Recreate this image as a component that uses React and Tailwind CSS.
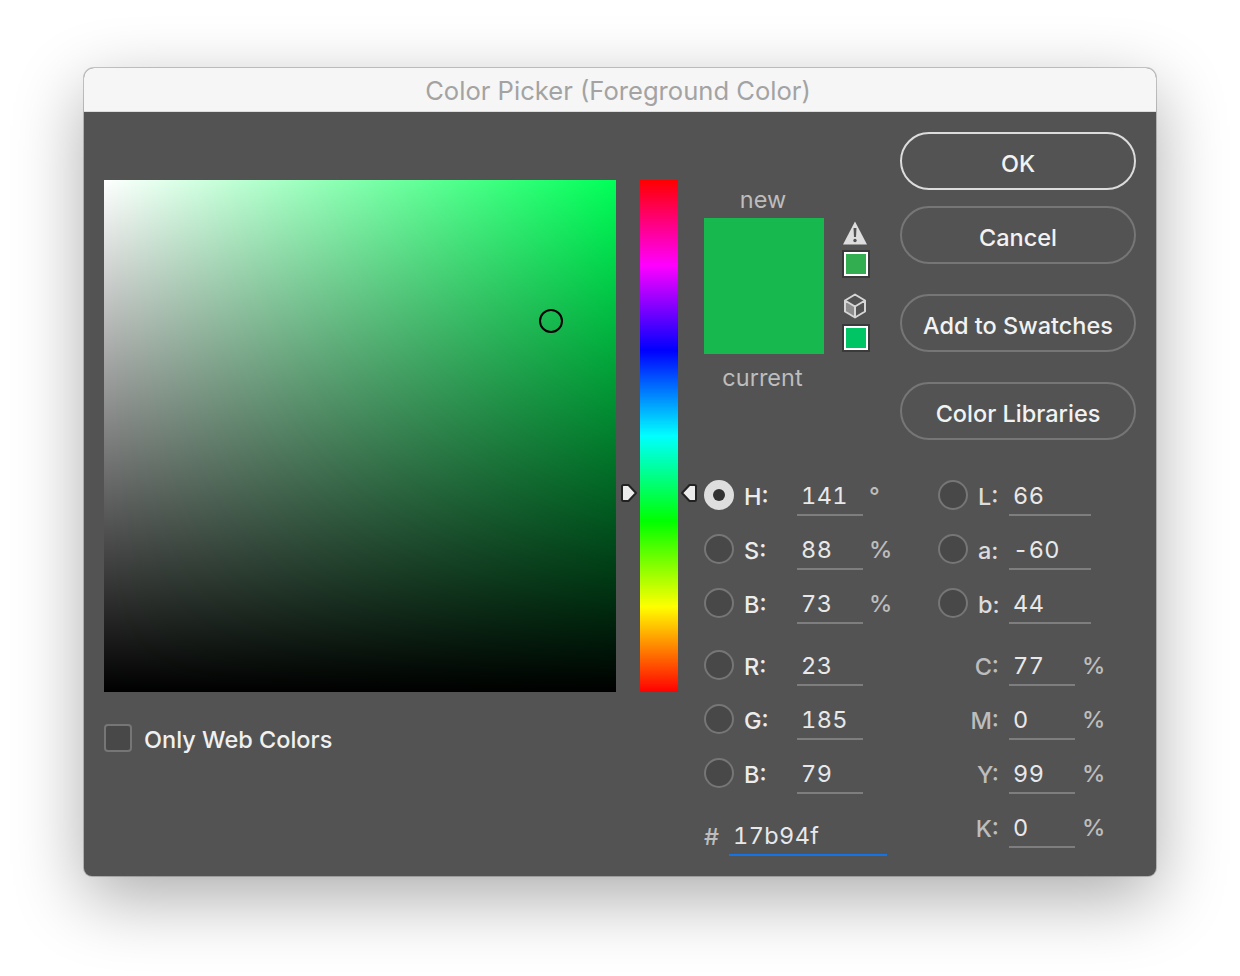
import React from 'react';

const font = { fontFamily: 'Inter, "Liberation Sans", sans-serif' };

const Radio = ({ on }) =>
  on ? (
    <div className="w-[30px] h-[30px] shrink-0 rounded-full bg-[#dedede] flex items-center justify-center">
      <div className="w-[12px] h-[12px] rounded-full bg-[#333333]"></div>
    </div>
  ) : (
    <div className="w-[30px] h-[30px] shrink-0 rounded-full bg-[#484848] border-2 border-[#767676]"></div>
  );

const Field = ({ value, width, active }) => (
  <div
    className={`${width} h-[38px] border-b-2 pl-[4px] flex items-center tracking-[0.4px] tabular-nums text-[#e8e8e8] ${
      active ? 'border-[#1473e6]' : 'border-[#7e7e7e]'
    }`}
  >
    {value}
  </div>
);

// left block rows: radio, label, field, unit
const HsbRow = ({ on, label, value, unit }) => (
  <div className="h-[54px] flex items-center">
    <Radio on={on} />
    <div className="w-[63px] pl-[10px] pt-[3px] font-medium text-[#ececec]">{label}</div>
    <div className="pt-[4px]">
      <Field value={value} width="w-[66px]" />
    </div>
    <div className="pl-[6px] pt-[2px] font-medium text-[#bdbdbd]">{unit}</div>
  </div>
);

const LabRow = ({ label, value }) => (
  <div className="h-[54px] flex items-center">
    <Radio />
    <div className="w-[41px] pl-[10px] pt-[3px] font-medium text-[#dcdcdc]">{label}</div>
    <div className="pt-[4px]">
      <Field value={value} width="w-[82px]" />
    </div>
  </div>
);

const CmykRow = ({ label, value }) => (
  <div className="h-[54px] flex items-center">
    <div className="w-[71px] pr-[10px] pt-[3px] text-right font-medium text-[#bdbdbd]">{label}</div>
    <div className="pt-[4px]">
      <Field value={value} width="w-[66px]" />
    </div>
    <div className="pl-[7px] pt-[2px] font-medium text-[#bdbdbd]">%</div>
  </div>
);

const Button = ({ children, primary, className = '' }) => (
  <div
    className={`w-[236px] h-[58px] rounded-full border-2 pt-[6px] flex items-center justify-center text-[#f2f2f2] font-medium ${
      primary ? 'border-[#dcdcdc]' : 'border-[#767676]'
    } ${className}`}
  >
    {children}
  </div>
);

const Swatch = ({ className }) => (
  <div className="w-[28px] h-[28px] border-2 border-[#3a3a3a] shrink-0">
    <div className={`w-full h-full border-2 border-white ${className}`}></div>
  </div>
);

const App = () => {
  return (
    <div className="w-[1240px] h-[976px] bg-white overflow-hidden flex justify-center pt-[68px]" style={font}>
      <div className="w-[1072px] h-[808px] rounded-t-[10px] rounded-b-[8px] overflow-hidden shadow-[0_0_0_1px_rgba(0,0,0,0.2),0_22px_70px_rgba(0,0,0,0.33)] text-[23.5px] leading-none bg-[#535353] flex flex-col">
        <div className="h-[44px] shrink-0 bg-[#f6f6f6] border-b border-[#dcdcdc] flex items-center justify-center pr-[4px] pt-[3px] text-[25.6px] text-[#a3a3a3]">
          Color Picker (Foreground Color)
        </div>

        <div className="flex-1 flex pl-[20px] pr-[20px]">
          {/* picker square */}
          <div className="w-[512px] pt-[68px]">
            <div className="relative w-[512px] h-[512px] bg-[linear-gradient(to_top,#000,transparent),linear-gradient(to_right,#fff,#00ff58)]">
              <div className="absolute left-[435px] top-[129px] w-[24px] h-[24px] rounded-full border-2 border-black"></div>
            </div>
            <div className="flex items-center mt-[32px]">
              <div className="w-[28px] h-[28px] rounded-[4px] border-2 border-[#767676] bg-[#484848]"></div>
              <div className="pl-[12px] pt-[4px] font-medium text-[#f0f0f0]">Only Web Colors</div>
            </div>
          </div>

          {/* hue strip */}
          <div className="ml-[24px] w-[38px] pt-[68px]">
            <div className="relative w-[38px] h-[512px] bg-[linear-gradient(to_bottom,#f00,#f0f,#00f,#0ff,#0f0,#ff0,#f00)]">
              <svg className="absolute left-[-20px] top-[303px]" width="18" height="20" viewBox="0 0 18 20">
                <path d="M3.500 2h5L16 10l-7.500 8h-5A1.500 1.500 0 0 1 2 16.500v-13A1.500 1.500 0 0 1 3.500 2z" fill="#ececec" stroke="#222" strokeWidth="2" strokeLinejoin="round" />
              </svg>
              <svg className="absolute left-[40px] top-[303px]" width="18" height="20" viewBox="0 0 18 20">
                <path d="M14.500 2h-5L2 10l7.500 8h5a1.500 1.500 0 0 0 1.500-1.500v-13A1.500 1.500 0 0 0 14.500 2z" fill="#ececec" stroke="#222" strokeWidth="2" strokeLinejoin="round" />
              </svg>
            </div>
          </div>

          {/* right side */}
          <div className="ml-[26px] w-[432px] pt-[20px]">
            <div className="flex h-[308px] justify-between">
              <div className="flex pt-[54px]">
                <div className="w-[120px] flex flex-col items-center">
                  <div className="h-[32px] pt-[2px] pr-[2px] text-[#bdbdbd]">new</div>
                  <div className="w-[120px] h-[136px] bg-[#17b94f]"></div>
                  <div className="pt-[12px] pr-[3px] text-[#bdbdbd]">current</div>
                </div>
                <div className="ml-[18px] pt-[33px] flex flex-col items-center">
                  <svg className="mr-[2px]" width="26" height="26" viewBox="0 0 26 26">
                    <path d="M13 2.500 25 25.500H1z" fill="#dedede" strokeLinejoin="round" />
                    <path d="M11.500 9h3l-.5 9h-2z" fill="#535353" />
                    <circle cx="13" cy="21.500" r="1.700" fill="#535353" />
                  </svg>
                  <div className="mt-[5px]">
                    <Swatch className="bg-[#32ad4f]" />
                  </div>
                  <svg className="mt-[15px] mr-[2px]" width="24" height="26" viewBox="0 0 24 26">
                    <path d="M2 7.500v11l10 6V13.500z" fill="#8e8e8e" />
                    <path d="M12 1.500 22 7.500v11l-10 6-10-6v-11zM2 7.500l10 6 10-6M12 13.500v11" fill="none" stroke="#d6d6d6" strokeWidth="2" strokeLinejoin="round" />
                  </svg>
                  <div className="mt-[5px]">
                    <Swatch className="bg-[#00c565]" />
                  </div>
                </div>
              </div>
              <div className="flex flex-col">
                <Button primary>OK</Button>
                <Button className="mt-[16px]">Cancel</Button>
                <Button className="mt-[30px]">Add to Swatches</Button>
                <Button className="mt-[30px]">Color Libraries</Button>
              </div>
            </div>

            <div className="mt-[28px] flex">
              <div className="w-[234px]">
                <HsbRow on label="H:" value="141" unit="°" />
                <HsbRow label="S:" value="88" unit="%" />
                <HsbRow label="B:" value="73" unit="%" />
                <div className="h-[8px]"></div>
                <HsbRow label="R:" value="23" />
                <HsbRow label="G:" value="185" />
                <HsbRow label="B:" value="79" />
                <div className="h-[8px]"></div>
                <div className="h-[54px] flex items-center">
                  <div className="w-[25px] pt-[4px] font-medium text-[#bdbdbd]">#</div>
                  <div className="pt-[4px]">
                    <Field value="17b94f" width="w-[158px]" active />
                  </div>
                </div>
              </div>
              <div className="flex-1">
                <LabRow label="L:" value="66" />
                <LabRow label="a:" value="-60" />
                <LabRow label="b:" value="44" />
                <div className="h-[8px]"></div>
                <CmykRow label="C:" value="77" />
                <CmykRow label="M:" value="0" />
                <CmykRow label="Y:" value="99" />
                <CmykRow label="K:" value="0" />
              </div>
            </div>
          </div>
        </div>
      </div>
    </div>
  );
};

export default App;
